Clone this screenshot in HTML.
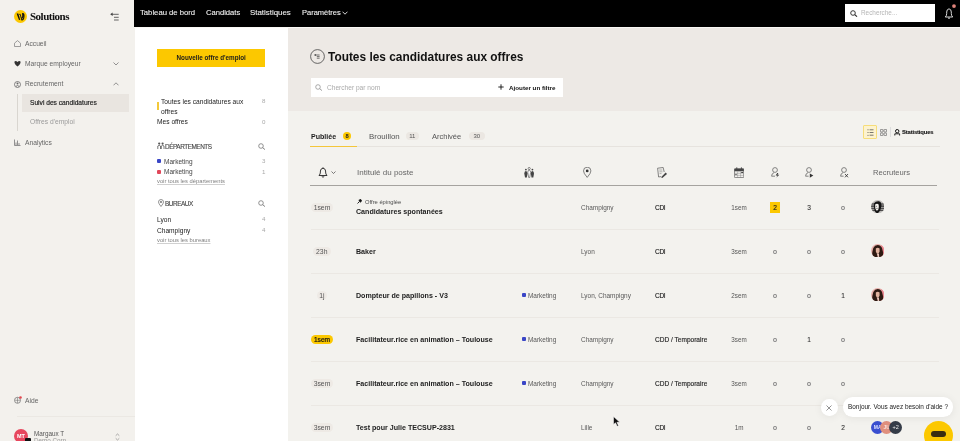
<!DOCTYPE html>
<html><head><meta charset="utf-8">
<style>
*{margin:0;padding:0;box-sizing:border-box}
html,body{width:960px;height:441px;overflow:hidden;background:#f3f2ee;font-family:"Liberation Sans",sans-serif;color:#1b1b1b}
.a{position:absolute;white-space:nowrap;will-change:transform}
.t{line-height:12px;height:12px}
#side{position:absolute;left:0;top:0;width:135px;height:441px;background:#f3f1ed}
#top{position:absolute;left:134px;top:0;width:826px;height:27px;background:#000}
#mid{position:absolute;left:135px;top:28px;width:153px;height:413px;background:#fff}
#hdr{position:absolute;left:288px;top:28px;width:672px;height:83px;background:#ede9e5}
#tbl{position:absolute;left:288px;top:111px;width:672px;height:330px;background:#f3f2ee}
.nav{color:#f0f0f0;font-size:8px;top:6.9px;-webkit-text-stroke:0.1px #f0f0f0}
.sb{font-size:6.7px;color:#666}
.g{color:#777}
.cnt{font-size:6.2px;color:#a8a8a8}
.row-t{font-size:7.1px;font-weight:bold;color:#222}
.cell{font-size:6.45px;color:#585858}
.sep{position:absolute;left:311px;width:628px;height:1px;background:#ebe8e3}
.num{font-size:6.6px;color:#333;width:12px;text-align:center;-webkit-text-stroke:0.1px #333}
.av{position:absolute;border-radius:50%}
</style></head><body>
<div id="side"></div>
<div id="top"></div>
<div id="mid"></div>
<div id="hdr"></div>
<div class="a" style="left:134px;top:27px;width:826px;height:1px;background:#faf8f5"></div>
<div id="tbl"></div>

<!-- ===== SIDEBAR ===== -->
<svg class="a" style="left:14px;top:9.8px" width="13" height="13" viewBox="0 0 13 13"><circle cx="6.5" cy="6.5" r="6.5" fill="#fcc800"/><path d="M2.6 3.6L4.3 3.4L6.2 9.8L5 10Z" fill="#111"/><path d="M5.3 4.4L6.2 4.2L7.3 8.5" stroke="#111" stroke-width="0.9" fill="none"/><path d="M7 9.6Q9.8 10.8 10 6Q10 3.4 8.8 3.5Q8.2 3.6 8.8 4.6Q9.2 8 7.2 8.6" stroke="#111" stroke-width="1.1" fill="none"/></svg>
<div class="a" style="left:29.5px;top:10px;font:bold 11px/13px 'Liberation Serif',serif;color:#111;letter-spacing:-0.5px">Solutions</div>
<svg class="a" style="left:110px;top:12px" width="10" height="10" viewBox="0 0 10 10"><path d="M1.5 2.3H8.7M4 5.3H8.7M4 8H8.7" stroke="#555" stroke-width="0.9" fill="none"/><path d="M0.2 2.3L2.6 0.6V4Z" fill="#444"/></svg>

<svg class="a" style="left:14px;top:40px" width="7" height="7" viewBox="0 0 7 7"><path d="M0.5 3.2L3.5 0.6L6.5 3.2V6.5H0.5Z" stroke="#888" stroke-width="0.8" fill="none"/></svg>
<div class="a t sb" style="left:24.5px;top:37.5px">Accueil</div>
<svg class="a" style="left:14px;top:60px" width="7" height="7" viewBox="0 0 7 7"><path d="M0.5 1.5Q2 0.5 3.5 2Q5 0.5 6.5 1.5Q7 4 3.5 6.5Q0 4 0.5 1.5Z" fill="#333"/></svg>
<div class="a t sb" style="left:24.5px;top:57.5px">Marque employeur</div>
<svg class="a" style="left:113px;top:61.5px" width="6" height="4" viewBox="0 0 6 4"><path d="M0.5 0.5L3 3L5.5 0.5" stroke="#777" stroke-width="0.8" fill="none"/></svg>
<svg class="a" style="left:14px;top:81px" width="7" height="7" viewBox="0 0 7 7"><circle cx="3.5" cy="3.5" r="3" stroke="#666" stroke-width="0.8" fill="none"/><circle cx="3.5" cy="2.6" r="1" fill="#666"/><path d="M2 5.3Q3.5 3.8 5 5.3" stroke="#666" stroke-width="0.8" fill="none"/></svg>
<div class="a t sb" style="left:24.5px;top:78.4px">Recrutement</div>
<svg class="a" style="left:113px;top:82px" width="6" height="4" viewBox="0 0 6 4"><path d="M0.5 3.3L3 0.8L5.5 3.3" stroke="#777" stroke-width="0.8" fill="none"/></svg>
<div class="a" style="left:17px;top:94px;width:1px;height:37px;background:#d9d6d0"></div>
<div class="a" style="left:21.5px;top:94px;width:107px;height:17.5px;background:#e9e5e0"></div>
<div class="a t" style="left:30px;top:96.8px;font-size:6.65px;color:#222;-webkit-text-stroke:0.18px #222">Suivi des candidatures</div>
<div class="a t sb" style="left:30px;top:116.4px;color:#9a9a9a">Offres d'emploi</div>
<svg class="a" style="left:14px;top:139px" width="7" height="7" viewBox="0 0 7 7"><path d="M0.5 0.5V6.5H6.5M2 6V3.5M3.5 6V1.5M5 6V4" stroke="#777" stroke-width="0.8" fill="none"/></svg>
<div class="a t sb" style="left:24.5px;top:136.5px">Analytics</div>

<svg class="a" style="left:14px;top:395.5px" width="8" height="8" viewBox="0 0 8 8"><circle cx="3.5" cy="4.3" r="3" stroke="#777" stroke-width="0.8" fill="none"/><path d="M1 4.3H6M3.5 1.5V7" stroke="#777" stroke-width="0.6"/><circle cx="6.5" cy="1.5" r="1.3" fill="#e3474f"/></svg>
<div class="a t sb" style="left:24.5px;top:394.6px">Aide</div>
<div class="a" style="left:17px;top:416px;width:118px;height:1px;background:#ebe8e3"></div>
<div class="a" style="left:14px;top:429px;width:14px;height:14px;border-radius:50%;background:#e7475e;color:#fff;font:bold 5.5px/14px 'Liberation Sans';text-align:center">MT</div>
<div class="a" style="left:25px;top:437.5px;width:6px;height:5px;background:#111;border-radius:1px"></div>
<div class="a t sb" style="left:33.7px;top:427.5px;font-size:6.35px;color:#555">Margaux T</div>
<div class="a t sb" style="left:33.7px;top:435px;font-size:6.3px;color:#999">Demo Corp</div>
<svg class="a" style="left:115px;top:433px" width="5" height="8" viewBox="0 0 5 8"><path d="M0.7 2.7L2.5 1L4.3 2.7M0.7 5.3L2.5 7L4.3 5.3" stroke="#888" stroke-width="0.7" fill="none"/></svg>

<!-- ===== TOP NAV ===== -->
<div class="a t nav" style="left:139.7px;font-size:7.7px">Tableau de bord</div>
<div class="a t nav" style="left:205.5px;font-size:7.6px">Candidats</div>
<div class="a t nav" style="left:250px;font-size:7.9px">Statistiques</div>
<div class="a t nav" style="left:302px;font-size:7.5px">Paramètres</div>
<svg class="a" style="left:341.5px;top:11px" width="6" height="4" viewBox="0 0 6 4"><path d="M0.5 0.7L3 3.2L5.5 0.7" stroke="#eee" stroke-width="0.9" fill="none"/></svg>
<div class="a" style="left:845px;top:4px;width:90px;height:17.7px;background:#fff"></div>
<svg class="a" style="left:850px;top:10px" width="8" height="7" viewBox="0 0 8 7"><circle cx="3" cy="3" r="2.3" stroke="#222" stroke-width="0.9" fill="none"/><path d="M4.7 4.7L7 6.6" stroke="#222" stroke-width="1.1"/></svg>
<div class="a t" style="left:861.4px;top:7.1px;font-size:6.4px;color:#b5b5b5">Recherche...</div>
<svg class="a" style="left:944px;top:4px" width="14" height="15" viewBox="0 0 14 15"><g transform="translate(0,3.5)"><path d="M1.3 9.5H8.7Q7.3 8.3 7.3 6V4.5Q7.3 1.8 5 1.3Q2.7 1.8 2.7 4.5V6Q2.7 8.3 1.3 9.5Z" stroke="#eee" stroke-width="0.9" fill="none"/><path d="M4 10.4Q5 11.4 6 10.4" stroke="#eee" stroke-width="0.9" fill="none"/></g><circle cx="10" cy="2.1" r="1.9" fill="#e0837a"/></svg>

<!-- ===== MIDDLE PANEL ===== -->
<div class="a" style="left:157px;top:49px;width:108.4px;height:18.2px;background:#fcc800"></div>
<div class="a t" style="left:157.4px;top:52.1px;width:108.4px;text-align:center;font-size:6.3px;font-weight:bold;color:#1a1a1a">Nouvelle offre d'emploi</div>
<div class="a" style="left:157px;top:102px;width:1.6px;height:8px;background:#f3c93a"></div>
<div class="a t" style="left:160.9px;top:95.7px;font-size:6.65px;color:#222">Toutes les candidatures aux</div>
<div class="a t" style="left:160.9px;top:105.6px;font-size:6.65px;color:#222">offres</div>
<div class="a t cnt" style="left:261.5px;top:95px">8</div>
<div class="a t" style="left:157px;top:116.2px;font-size:6.65px;color:#222">Mes offres</div>
<div class="a t cnt" style="left:261.5px;top:115.6px">0</div>

<svg class="a" style="left:157px;top:142px" width="8" height="8" viewBox="0 0 8 8"><circle cx="2.2" cy="1.6" r="1.1" fill="#555"/><circle cx="5.6" cy="1.6" r="1.1" fill="#555"/><path d="M0.8 7V4Q2.2 2.6 3.5 4V7M4.3 7V4Q5.6 2.6 7 4V7" stroke="#555" stroke-width="0.8" fill="none"/></svg>
<div class="a t" style="left:164.8px;top:140.7px;font-size:6.4px;color:#444;letter-spacing:-0.45px;-webkit-text-stroke:0.12px #444">DÉPARTEMENTS</div>
<svg class="a" style="left:257.5px;top:142.5px" width="8" height="7" viewBox="0 0 8 7"><circle cx="3" cy="3" r="2.3" stroke="#666" stroke-width="0.7" fill="none"/><path d="M4.7 4.7L7 6.6" stroke="#666" stroke-width="0.8"/></svg>
<div class="a" style="left:157px;top:159px;width:4.4px;height:4.4px;background:#3a46c6;border-radius:1px"></div>
<div class="a t" style="left:163.5px;top:155.5px;font-size:6.5px;color:#444">Marketing</div>
<div class="a t cnt" style="left:262px;top:155px">3</div>
<div class="a" style="left:157px;top:169.5px;width:4.4px;height:4.4px;background:#e1475a;border-radius:1px"></div>
<div class="a t" style="left:163.5px;top:166px;font-size:6.5px;color:#444">Marketing</div>
<div class="a t cnt" style="left:262px;top:165.5px">1</div>
<div class="a t" style="left:157px;top:175px;font-size:5.8px;color:#808080;text-decoration:underline;text-decoration-color:#d0d0d0">voir tous les départements</div>

<svg class="a" style="left:158px;top:199px" width="6" height="8" viewBox="0 0 6 8"><path d="M3 7.5Q0.5 4.5 0.5 3A2.5 2.5 0 0 1 5.5 3Q5.5 4.5 3 7.5Z" stroke="#666" stroke-width="0.7" fill="none"/><circle cx="3" cy="3" r="0.9" fill="#666"/></svg>
<div class="a t" style="left:164.8px;top:197.9px;font-size:6.4px;color:#444;letter-spacing:-0.45px;-webkit-text-stroke:0.12px #444">BUREAUX</div>
<svg class="a" style="left:257.5px;top:199.5px" width="8" height="7" viewBox="0 0 8 7"><circle cx="3" cy="3" r="2.3" stroke="#666" stroke-width="0.7" fill="none"/><path d="M4.7 4.7L7 6.6" stroke="#666" stroke-width="0.8"/></svg>
<div class="a t" style="left:157px;top:213.5px;font-size:6.6px;color:#222">Lyon</div>
<div class="a t cnt" style="left:262px;top:213px">4</div>
<div class="a t" style="left:157px;top:224.9px;font-size:6.6px;color:#222">Champigny</div>
<div class="a t cnt" style="left:262px;top:224.3px">4</div>
<div class="a t" style="left:157px;top:234px;font-size:5.8px;color:#808080;text-decoration:underline;text-decoration-color:#d0d0d0">voir tous les bureaux</div>

<!-- ===== HEADER ===== -->
<svg class="a" style="left:310px;top:48.7px" width="15" height="15" viewBox="0 0 15 15"><circle cx="7.5" cy="7.5" r="6.9" stroke="#444" stroke-width="0.8" fill="none"/><path d="M5.8 6H9.6M6.8 7.6H9.6M6.8 9.2H9.6" stroke="#444" stroke-width="0.75" fill="none"/><path d="M3.9 6L5.8 4.9V7.1Z" fill="#222"/></svg>
<div class="a" style="left:328px;top:47.7px;font:bold 11.9px/18px 'Liberation Sans';color:#111">Toutes les candidatures aux offres</div>
<div class="a" style="left:311px;top:78.3px;width:252px;height:18.7px;background:#fff"></div>
<svg class="a" style="left:315px;top:84px" width="8" height="7" viewBox="0 0 8 7"><circle cx="3" cy="3" r="2.3" stroke="#888" stroke-width="0.7" fill="none"/><path d="M4.7 4.7L7 6.6" stroke="#888" stroke-width="0.8"/></svg>
<div class="a t" style="left:326.8px;top:81.5px;font-size:6.6px;color:#aaa">Chercher par nom</div>
<svg class="a" style="left:498px;top:84px" width="6" height="6" viewBox="0 0 6 6"><path d="M3 0.3V5.7M0.3 3H5.7" stroke="#111" stroke-width="0.9"/></svg>
<div class="a t" style="left:508.5px;top:81.5px;font-size:6.25px;font-weight:bold;color:#111">Ajouter un filtre</div>

<!-- ===== TABS ===== -->
<div class="a t" style="left:310.8px;top:130.9px;font-size:7.05px;font-weight:bold;color:#1b1b1b">Publiée</div>
<div class="a" style="left:342.7px;top:132px;width:8.3px;height:8.3px;border-radius:50%;background:#fcc800;font:bold 5.8px/8.3px 'Liberation Sans';text-align:center;color:#222">8</div>
<div class="a t" style="left:368.7px;top:130.6px;font-size:7.9px;color:#555">Brouillon</div>
<div class="a" style="left:406px;top:132px;width:12.7px;height:8.3px;border-radius:4px;background:#ebe7e2;font:6px/8.3px 'Liberation Sans';text-align:center;color:#555">11</div>
<div class="a t" style="left:432.3px;top:130.6px;font-size:7.5px;color:#555">Archivée</div>
<div class="a" style="left:468.7px;top:132px;width:15.7px;height:8.3px;border-radius:4px;background:#ebe7e2;font:6px/8.3px 'Liberation Sans';text-align:center;color:#555">30</div>
<div class="a" style="left:310px;top:146px;width:630px;height:1px;background:#e6e3de"></div>
<div class="a" style="left:310px;top:146px;width:47.3px;height:1px;background:#f4c63a"></div>

<div class="a" style="left:863px;top:125.2px;width:14px;height:13.8px;background:#fdf3cf;border:0.8px solid #f6dd7a;border-radius:1px"></div>
<svg class="a" style="left:866.5px;top:128.8px" width="7" height="7" viewBox="0 0 7 7"><path d="M2.6 0.8H6.5M2.6 3.5H6.5M2.6 6.2H6.5" stroke="#555" stroke-width="0.8"/><circle cx="1" cy="0.8" r="0.55" fill="#555"/><circle cx="1" cy="3.5" r="0.55" fill="#555"/><circle cx="1" cy="6.2" r="0.55" fill="#555"/></svg>
<svg class="a" style="left:880px;top:128.9px" width="7" height="7" viewBox="0 0 7 7"><rect x="0.4" y="0.4" width="2.6" height="2.6" rx="0.5" stroke="#666" stroke-width="0.7" fill="none"/><rect x="4" y="0.4" width="2.6" height="2.6" rx="0.5" stroke="#666" stroke-width="0.7" fill="none"/><rect x="0.4" y="4" width="2.6" height="2.6" rx="0.5" stroke="#666" stroke-width="0.7" fill="none"/><rect x="4" y="4" width="2.6" height="2.6" rx="0.5" stroke="#666" stroke-width="0.7" fill="none"/></svg>
<div class="a" style="left:889.5px;top:127px;width:0.6px;height:10px;background:#ddd"></div>
<svg class="a" style="left:894px;top:129px" width="7" height="7" viewBox="0 0 7 7"><circle cx="3.2" cy="2.2" r="1.7" stroke="#111" stroke-width="1" fill="none"/><path d="M0.8 6.5V4.8H5.6V6.5" stroke="#111" stroke-width="0.9" fill="none"/></svg>
<div class="a t" style="left:901.6px;top:126px;font-size:5.9px;font-weight:bold;color:#111;letter-spacing:-0.17px;-webkit-text-stroke:0.1px #111">Statistiques</div>

<!-- ===== TABLE HEADER ===== -->
<svg class="a" style="left:318px;top:167px" width="10" height="11" viewBox="0 0 10 11"><path d="M1 8.5H9Q7.6 7.3 7.6 5V4Q7.6 1.7 5 1.2Q2.4 1.7 2.4 4V5Q2.4 7.3 1 8.5Z" stroke="#222" stroke-width="0.9" fill="none"/><path d="M3.8 9.6Q5 10.6 6.2 9.6" stroke="#222" stroke-width="0.9" fill="none"/><path d="M5 0.3V1.2" stroke="#222" stroke-width="0.8"/></svg>
<svg class="a" style="left:331px;top:170.5px" width="5" height="3" viewBox="0 0 5 3"><path d="M0.5 0.5L2.5 2.5L4.5 0.5" stroke="#444" stroke-width="0.7" fill="none"/></svg>
<div class="a t" style="left:357px;top:166.6px;font-size:8px;color:#666">Intitulé du poste</div>
<svg class="a" style="left:523.8px;top:167px" width="11" height="11" viewBox="0 0 11 11"><circle cx="5.2" cy="1.5" r="1.1" stroke="#444" stroke-width="0.6" fill="none"/><circle cx="1.9" cy="2.6" r="0.9" fill="#444"/><circle cx="8.4" cy="2.6" r="0.9" fill="#444"/><path d="M0.3 6.5Q0.3 4 1.9 4Q3.5 4 3.5 6.5L2.8 10.5H1Z" fill="#444"/><path d="M6.8 6.5Q6.8 4 8.4 4Q10 4 10 6.5L9.3 10.5H7.5Z" fill="#444"/><path d="M3.8 5.5Q3.8 3.2 5.2 3.2Q6.6 3.2 6.6 5.5L5.7 10.5H4.7Z" stroke="#444" stroke-width="0.6" fill="#fff"/></svg>
<svg class="a" style="left:583px;top:167px" width="8.5" height="11" viewBox="0 0 8.5 11"><path d="M4.2 10.4Q0.5 6.2 0.5 3.9A3.7 3.7 0 0 1 7.9 3.9Q7.9 6.2 4.2 10.4Z" stroke="#444" stroke-width="0.65" fill="none"/><circle cx="4.2" cy="3.9" r="1.4" fill="#333"/></svg>
<svg class="a" style="left:656.5px;top:166.8px" width="11" height="11" viewBox="0 0 11 11"><path d="M0.6 1.2L6.2 0.5L7.2 5M1.6 10L0.6 1.2M1.6 10L4 9.6" stroke="#555" stroke-width="0.7" fill="none"/><path d="M2.2 3H5.3M2.4 4.8H5.5M2.6 6.6H4.5" stroke="#777" stroke-width="0.55"/><path d="M4 10.3L8.7 5.6L10 6.9L5.3 11Z" fill="#444"/></svg>
<svg class="a" style="left:733.8px;top:166.8px" width="10.2" height="11" viewBox="0 0 10.2 11"><rect x="0.4" y="1.7" width="9.4" height="8.9" rx="0.8" stroke="#555" stroke-width="0.7" fill="none"/><rect x="0.4" y="1.7" width="9.4" height="2.6" fill="#444"/><path d="M2.8 0.3V2M7.4 0.3V2" stroke="#444" stroke-width="0.9"/><path d="M3.6 4.4V10.4M6.6 4.4V10.4M0.5 6.3H9.7M0.5 8.4H9.7" stroke="#888" stroke-width="0.45"/><circle cx="2" cy="7.4" r="0.65" fill="#333"/><rect x="7.2" y="5" width="2" height="1" fill="#444"/></svg>
<svg class="a" style="left:771px;top:167px" width="9" height="11" viewBox="0 0 9 11"><circle cx="4" cy="3" r="2.4" stroke="#555" stroke-width="0.7" fill="none"/><path d="M3 5.7Q0.6 6.4 0.6 9.2H4" stroke="#555" stroke-width="0.7" fill="none"/><path d="M6.3 6L4.6 8.4H6.6L5.2 10.8L8.3 7.8H6.4L7.4 6Z" fill="#333"/></svg>
<svg class="a" style="left:805.3px;top:167px" width="9" height="11" viewBox="0 0 9 11"><circle cx="4" cy="3" r="2.4" stroke="#555" stroke-width="0.7" fill="none"/><path d="M3 5.7Q0.6 6.4 0.6 9.2H3.6" stroke="#555" stroke-width="0.7" fill="none"/><path d="M4.8 6.5L8.3 8.6L4.8 10.7Z" fill="#333"/></svg>
<svg class="a" style="left:839.5px;top:167px" width="9" height="11" viewBox="0 0 9 11"><circle cx="4" cy="3" r="2.4" stroke="#555" stroke-width="0.7" fill="none"/><path d="M3 5.7Q0.6 6.4 0.6 9.2H3.6" stroke="#555" stroke-width="0.7" fill="none"/><path d="M5 7L8 10.3M8 7L5 10.3" stroke="#333" stroke-width="0.85"/></svg>
<div class="a t" style="left:872.5px;top:166.8px;font-size:7.6px;color:#666">Recruteurs</div>
<div class="a" style="left:310px;top:184.7px;width:627px;height:1.2px;background:#a5a39f"></div>

<!-- ===== ROWS ===== -->
<!--ROWS-->
<div class="a" style="left:310.5px;top:202.5px;width:22px;height:9px;border-radius:4.5px;background:#eeeae5;font:6.8px/10px 'Liberation Sans';text-align:center;color:#555">1sem</div>
<svg class="a" style="left:356.5px;top:198.5px" width="5" height="5" viewBox="0 0 5 5"><path d="M0.5 4.5L2.2 2.8M1.8 1.5L3.5 0.3L4.7 1.5L3.5 3.2Z" stroke="#111" stroke-width="0.9" fill="#111"/></svg>
<div class="a t" style="left:365px;top:196px;font-size:5.8px;color:#4a4a4a">Offre épinglée</div>
<div class="a t row-t" style="left:355.8px;top:205.8px">Candidatures spontanées</div>
<div class="a t cell" style="left:580.5px;top:201.6px">Champigny</div>
<div class="a t" style="left:654.5px;top:202.1px;font-size:6.55px;color:#2a2a2a;-webkit-text-stroke:0.15px #2a2a2a;letter-spacing:-0.35px">CDI</div>
<div class="a t cell" style="left:719px;width:40px;text-align:center;top:201.6px;font-size:6.3px;color:#555">1sem</div>
<div class="a" style="left:770px;top:201.7px;width:10px;height:10.8px;background:#fcc800;font:6.6px/12.4px 'Liberation Sans';text-align:center;color:#222;-webkit-text-stroke:0.15px #222">2</div>
<div class="a t num" style="left:803px;top:202.3px;color:#333">3</div>
<div class="a" style="left:841.1px;top:205.5px;width:3.8px;height:4.2px;border:0.65px solid #8a8a8a;border-radius:50%"></div>
<svg class="a" style="left:870.9px;top:200.2px" width="13.4" height="13.4" viewBox="0 0 14 14"><defs><clipPath id="cm0"><circle cx="7" cy="7" r="7"/></clipPath></defs><g clip-path="url(#cm0)"><rect width="14" height="14" fill="#bdbbb8"/><path d="M0 4.2H14M0 6.4H14M0 8.6H14M0 10.8H14" stroke="#2a2a2a" stroke-width="1.1"/><path d="M3.2 3.5Q5 0.8 8.5 1.3Q11.5 2.2 10.8 6.5Q10.4 10.5 8.2 12.8Q6.5 14.5 5 13Q3.5 11.5 3.2 8Z" fill="#151515"/><path d="M4.3 4.8Q6.2 3.4 8 4.6Q8.6 7.8 7.6 10.3Q6.6 11.6 5.4 10.6Q4 8.8 4.3 4.8Z" fill="#f4f2ee"/><path d="M5 6.6H6.3M5.4 8.8H7" stroke="#333" stroke-width="0.6"/></g></svg>
<div class="sep" style="top:228.5px"></div>
<div class="a" style="left:312.75px;top:246.5px;width:17.5px;height:9px;border-radius:4.5px;background:#eeeae5;font:6.8px/10px 'Liberation Sans';text-align:center;color:#555">23h</div>
<div class="a t row-t" style="left:355.8px;top:245.8px">Baker</div>
<div class="a t cell" style="left:580.5px;top:245.6px">Lyon</div>
<div class="a t" style="left:654.5px;top:246.1px;font-size:6.55px;color:#2a2a2a;-webkit-text-stroke:0.15px #2a2a2a;letter-spacing:-0.35px">CDI</div>
<div class="a t cell" style="left:719px;width:40px;text-align:center;top:245.6px;font-size:6.3px;color:#555">3sem</div>
<div class="a" style="left:773.1px;top:249.5px;width:3.8px;height:4.2px;border:0.65px solid #8a8a8a;border-radius:50%"></div>
<div class="a" style="left:807.1px;top:249.5px;width:3.8px;height:4.2px;border:0.65px solid #8a8a8a;border-radius:50%"></div>
<div class="a" style="left:841.1px;top:249.5px;width:3.8px;height:4.2px;border:0.65px solid #8a8a8a;border-radius:50%"></div>
<svg class="a" style="left:870.9px;top:244.4px" width="13.4" height="13.4" viewBox="0 0 14 14"><defs><clipPath id="cw1"><circle cx="7" cy="7" r="7"/></clipPath></defs><g clip-path="url(#cw1)"><rect width="14" height="14" fill="#e7b0ab"/><path d="M10.5 0L14 3V14H11Z" fill="#ec8a93"/><path d="M1.2 14Q1 8 2.4 4.2Q4 1 7 1Q10 1 11.5 4.2Q13 8 12.8 14Z" fill="#2e1a12"/><path d="M5 4.6Q7 3.4 9 4.6L8.9 8.2Q8.4 10 7 10.2Q5.6 10 5.1 8.2Z" fill="#e2b39f"/><path d="M6 10L7.2 14H8.6L8.3 10Z" fill="#e9c3b8"/></g></svg>
<div class="sep" style="top:272.5px"></div>
<div class="a" style="left:316.5px;top:290.5px;width:10px;height:9px;border-radius:4.5px;background:#eeeae5;font:6.8px/10px 'Liberation Sans';text-align:center;color:#555">1j</div>
<div class="a t row-t" style="left:355.8px;top:289.8px">Dompteur de papillons - V3</div>
<div class="a" style="left:521.8px;top:292.8px;width:4.4px;height:4.4px;border-radius:1px;background:#3a46c6"></div>
<div class="a t cell" style="left:528px;top:289.6px">Marketing</div>
<div class="a t cell" style="left:580.5px;top:289.6px">Lyon, Champigny</div>
<div class="a t" style="left:654.5px;top:290.1px;font-size:6.55px;color:#2a2a2a;-webkit-text-stroke:0.15px #2a2a2a;letter-spacing:-0.35px">CDI</div>
<div class="a t cell" style="left:719px;width:40px;text-align:center;top:289.6px;font-size:6.3px;color:#555">2sem</div>
<div class="a" style="left:773.1px;top:293.5px;width:3.8px;height:4.2px;border:0.65px solid #8a8a8a;border-radius:50%"></div>
<div class="a" style="left:807.1px;top:293.5px;width:3.8px;height:4.2px;border:0.65px solid #8a8a8a;border-radius:50%"></div>
<div class="a t num" style="left:837px;top:290.3px;color:#333">1</div>
<svg class="a" style="left:870.9px;top:288.4px" width="13.4" height="13.4" viewBox="0 0 14 14"><defs><clipPath id="cw2"><circle cx="7" cy="7" r="7"/></clipPath></defs><g clip-path="url(#cw2)"><rect width="14" height="14" fill="#e7b0ab"/><path d="M10.5 0L14 3V14H11Z" fill="#ec8a93"/><path d="M1.2 14Q1 8 2.4 4.2Q4 1 7 1Q10 1 11.5 4.2Q13 8 12.8 14Z" fill="#2e1a12"/><path d="M5 4.6Q7 3.4 9 4.6L8.9 8.2Q8.4 10 7 10.2Q5.6 10 5.1 8.2Z" fill="#e2b39f"/><path d="M6 10L7.2 14H8.6L8.3 10Z" fill="#e9c3b8"/></g></svg>
<div class="sep" style="top:316.5px"></div>
<div class="a" style="left:311px;top:334.5px;width:22px;height:9px;border-radius:4.5px;background:#fcc800;font:6.6px/10px 'Liberation Sans';text-align:center;color:#111;-webkit-text-stroke:0.2px #111">1sem</div>
<div class="a t row-t" style="left:355.8px;top:333.8px">Facilitateur.rice en animation – Toulouse</div>
<div class="a" style="left:521.8px;top:336.8px;width:4.4px;height:4.4px;border-radius:1px;background:#3a46c6"></div>
<div class="a t cell" style="left:528px;top:333.6px">Marketing</div>
<div class="a t cell" style="left:580.5px;top:333.6px">Champigny</div>
<div class="a t" style="left:654.5px;top:334.1px;font-size:6.55px;color:#2a2a2a;-webkit-text-stroke:0.15px #2a2a2a;letter-spacing:0px">CDD / Temporaire</div>
<div class="a t cell" style="left:719px;width:40px;text-align:center;top:333.6px;font-size:6.3px;color:#555">3sem</div>
<div class="a" style="left:773.1px;top:337.5px;width:3.8px;height:4.2px;border:0.65px solid #8a8a8a;border-radius:50%"></div>
<div class="a t num" style="left:803px;top:334.3px;color:#333">1</div>
<div class="a" style="left:841.1px;top:337.5px;width:3.8px;height:4.2px;border:0.65px solid #8a8a8a;border-radius:50%"></div>
<div class="sep" style="top:360.5px"></div>
<div class="a" style="left:310.5px;top:378.5px;width:22px;height:9px;border-radius:4.5px;background:#eeeae5;font:6.8px/10px 'Liberation Sans';text-align:center;color:#555">3sem</div>
<div class="a t row-t" style="left:355.8px;top:377.8px">Facilitateur.rice en animation – Toulouse</div>
<div class="a" style="left:521.8px;top:380.8px;width:4.4px;height:4.4px;border-radius:1px;background:#3a46c6"></div>
<div class="a t cell" style="left:528px;top:377.6px">Marketing</div>
<div class="a t cell" style="left:580.5px;top:377.6px">Champigny</div>
<div class="a t" style="left:654.5px;top:378.1px;font-size:6.55px;color:#2a2a2a;-webkit-text-stroke:0.15px #2a2a2a;letter-spacing:0px">CDD / Temporaire</div>
<div class="a t cell" style="left:719px;width:40px;text-align:center;top:377.6px;font-size:6.3px;color:#555">3sem</div>
<div class="a" style="left:773.1px;top:381.5px;width:3.8px;height:4.2px;border:0.65px solid #8a8a8a;border-radius:50%"></div>
<div class="a" style="left:807.1px;top:381.5px;width:3.8px;height:4.2px;border:0.65px solid #8a8a8a;border-radius:50%"></div>
<div class="a" style="left:841.1px;top:381.5px;width:3.8px;height:4.2px;border:0.65px solid #8a8a8a;border-radius:50%"></div>
<div class="sep" style="top:404.5px"></div>
<div class="a" style="left:310.5px;top:422.5px;width:22px;height:9px;border-radius:4.5px;background:#eeeae5;font:6.8px/10px 'Liberation Sans';text-align:center;color:#555">3sem</div>
<div class="a t row-t" style="left:355.8px;top:421.8px">Test pour Julie TECSUP-2831</div>
<div class="a t cell" style="left:580.5px;top:421.6px">Lille</div>
<div class="a t" style="left:654.5px;top:422.1px;font-size:6.55px;color:#2a2a2a;-webkit-text-stroke:0.15px #2a2a2a;letter-spacing:-0.35px">CDI</div>
<div class="a t cell" style="left:719px;width:40px;text-align:center;top:421.6px;font-size:6.3px;color:#555">1m</div>
<div class="a" style="left:773.1px;top:425.5px;width:3.8px;height:4.2px;border:0.65px solid #8a8a8a;border-radius:50%"></div>
<div class="a" style="left:807.1px;top:425.5px;width:3.8px;height:4.2px;border:0.65px solid #8a8a8a;border-radius:50%"></div>
<div class="a t num" style="left:837px;top:422.3px;color:#333">2</div>
<div class="a" style="left:870.8px;top:420.5px;width:13.4px;height:13.4px;border-radius:50%;background:#3a4fd0;font:bold 5px/13.4px 'Liberation Sans';color:#dfe3ff;text-align:center">MA</div>
<div class="a" style="left:880.2px;top:420.5px;width:13.4px;height:13.4px;border-radius:50%;background:#e0907e;font:bold 5px/13.4px 'Liberation Sans';color:#fbe3dc;text-align:center">JU</div>
<div class="a" style="left:889.2px;top:420.5px;width:13.4px;height:13.4px;border-radius:50%;background:#353c48;font:5.5px/13.4px 'Liberation Sans';color:#eee;text-align:center">+2</div>
<!--/ROWS-->
<!-- ===== CHAT ===== -->
<div class="a" style="left:820.8px;top:399px;width:16.5px;height:16.5px;border-radius:50%;background:#fff;box-shadow:0 1px 8px rgba(0,0,0,0.07)"></div>
<svg class="a" style="left:826px;top:404.5px" width="6" height="6" viewBox="0 0 6 6"><path d="M0.5 0.5L5.5 5.5M5.5 0.5L0.5 5.5" stroke="#777" stroke-width="0.8"/></svg>
<div class="a" style="left:842.5px;top:397px;width:110px;height:19.7px;border-radius:9.8px;background:#fff;box-shadow:0 1px 8px rgba(0,0,0,0.07)"></div>
<div class="a t" style="left:847.5px;top:401px;font-size:6.45px;color:#222">Bonjour. Vous avez besoin d'aide ?</div>
<div class="a" style="left:924px;top:420.5px;width:29px;height:29px;border-radius:50%;background:#fcc800"></div>
<div class="a" style="left:931px;top:431px;width:15px;height:6px;border-radius:3px;background:#3a2e10"></div>
<svg class="a" style="left:612.6px;top:416.3px" width="8" height="11" viewBox="0 0 8 11"><path d="M0.5 0.5V8.5L2.5 6.8L4.2 10.3L5.5 9.7L3.9 6.3H6.8Z" fill="#111" stroke="#fff" stroke-width="0.5"/></svg>
</body></html>
